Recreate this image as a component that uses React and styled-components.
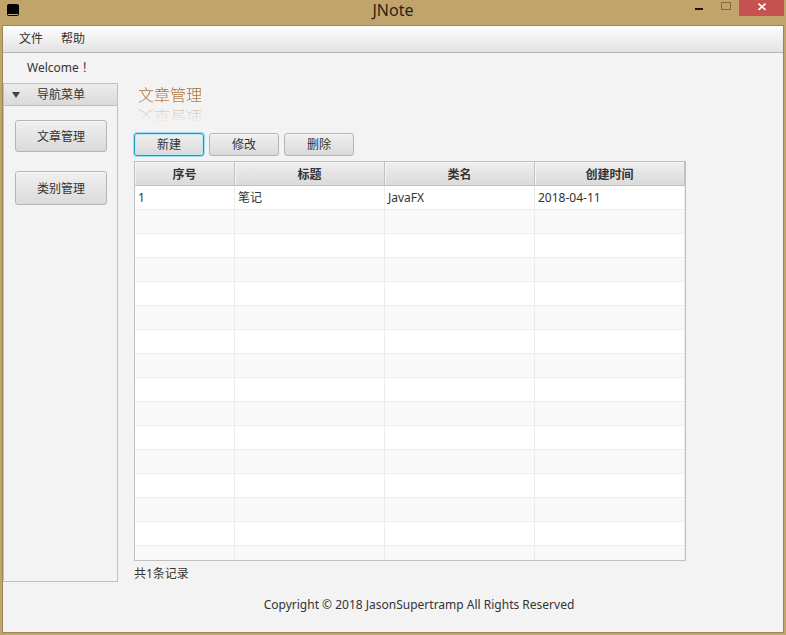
import React from "react";
import styled, { createGlobalStyle, css } from "styled-components";

const GlobalStyle = createGlobalStyle`
  *, *::before, *::after { box-sizing: border-box; }
  body {
    margin: 0;
    background: #c0a46c;
    color: #333;
    font: 12px/16px "Noto Sans", "Noto Sans CJK SC", sans-serif;
  }
  button { font: inherit; color: inherit; }
`;

const Window = styled.div`
  display: flex;
  flex-direction: column;
  min-height: 100vh;
  padding: 0 2px 2px;
`;

const TitleBar = styled.header`
  display: grid;
  grid-template-columns: 1fr auto 1fr;
  height: 25px;
`;

const AppIcon = styled.svg`
  margin: 4px 0 0 5px;
`;

const Title = styled.h1`
  margin: 0;
  font-size: 16px;
  line-height: 20px;
  font-weight: 400;
  color: #2c2413;
`;

const Controls = styled.div`
  display: flex;
  justify-content: flex-end;
  align-items: flex-start;
`;

const ControlButton = styled.button`
  display: flex;
  width: ${(p) => (p.$close ? 45 : 27)}px;
  height: 16px;
  padding: 0;
  border: 0;
  background: ${(p) => (p.$close ? "#c75050" : "transparent")};
  svg { margin: auto; }
`;

const Client = styled.div`
  flex: 1;
  display: flex;
  flex-direction: column;
  border: 1px solid #9a8656;
  background: #f3f3f3;
`;

const MenuBar = styled.nav`
  display: flex;
  height: 27px;
  padding-left: 8px;
  background: linear-gradient(#fdfdfd, #e3e3e3);
  border-bottom: 1px solid #b4b4b4;
`;

const MenuItem = styled.button`
  padding: 0 8px;
  margin-right: 2px;
  border: 0;
  background: none;
`;

const Welcome = styled.p`
  margin: 0;
  padding: 7px 24px;
  font-family: "Noto Sans", "Noto Sans CJK TC", sans-serif;
`;

const Body = styled.div`
  display: flex;
  gap: 16px;
`;

const Sidebar = styled.aside`
  flex: 0 0 115px;
  border: 1px solid #c0c0c0;
`;

const PaneHeader = styled.button`
  display: flex;
  align-items: center;
  gap: 17px;
  width: 100%;
  height: 22px;
  padding: 0 8px;
  border: 0;
  border-bottom: 1px solid #c0c0c0;
  background: linear-gradient(#ececec, #dadada);
`;

const PaneBody = styled.div`
  display: flex;
  flex-direction: column;
  gap: 19px;
  padding: 14px 10px 14px 11px;
`;

const raised = css`
  padding: 0;
  border: 1px solid #b5b5b5;
  border-radius: 3px;
  background: linear-gradient(#f0f0f0, #dadada);
  box-shadow: inset 0 1px #f8f8f8;
`;

const NavButton = styled.button`
  ${raised}
  height: ${(p) => (p.$tall ? 34 : 32)}px;
  padding-top: 2px;
`;

const Main = styled.main`
  flex: 1;
  min-width: 0;
`;

const Heading = styled.h2`
  width: max-content;
  margin: 2px 0 28px 4px;
  font-size: 16px;
  line-height: 20px;
  font-weight: 300;
  background: linear-gradient(#98602c, #b87a3e);
  background-clip: text;
  color: transparent;
  -webkit-box-reflect: below 2px linear-gradient(transparent 25%, rgba(0, 0, 0, 0.5));
`;

const Toolbar = styled.div`
  display: flex;
  gap: 5px;
  margin-bottom: 5px;
`;

const ActionButton = styled.button`
  ${raised}
  width: 70px;
  height: 23px;
  ${(p) =>
    p.$focused &&
    css`
      border-color: #1a9cbd;
      box-shadow: 0 0 0 1px #9edcf0, inset 0 0 0 1px #c4e6f0;
    `}
`;

const TableView = styled.div`
  max-width: 552px;
  height: 400px;
  margin-right: 16px;
  overflow: hidden;
  border: 1px solid #c0c0c0;
  background: #fff;
`;

const Table = styled.table`
  width: 100%;
  table-layout: fixed;
  border-collapse: separate;
  border-spacing: 0;
`;

const Col = styled.col`
  width: ${(p) => (p.$share / 11) * 100}%;
`;

const HeadCell = styled.th`
  height: 24px;
  padding: 2px 0 0;
  font-weight: 700;
  border-right: 1px solid #c0c0c0;
  border-bottom: 1px solid #c0c0c0;
  background: linear-gradient(#efefef, #dadada);
  box-shadow: inset 1px 1px #f6f6f6;
`;

const Row = styled.tr`
  background: #fff;
  &:nth-child(even) { background: #f9f9f9; }
`;

const Cell = styled.td`
  height: 24px;
  padding: 0 3px;
  border-right: 1px solid #ececec;
  border-bottom: 1px solid #ececec;
`;

const Count = styled.p`
  margin: 0;
  padding: 5px 0 0;
`;

const Footer = styled.footer`
  padding: 15px 0 16px 52px;
  text-align: center;
`;

const columns = [
  { label: "序号", share: 2 },
  { label: "标题", share: 3 },
  { label: "类名", share: 3 },
  { label: "创建时间", share: 3 },
];
const records = [["1", "笔记", "JavaFX", "2018-04-11"]];
const ROW_COUNT = 16;
const rows = Array.from({ length: ROW_COUNT }, (_, i) => records[i] || ["", "", "", ""]);

export default function App() {
  return (
    <Window>
      <GlobalStyle />
      <TitleBar>
        <AppIcon width="12" height="12" viewBox="0 0 12 12" aria-hidden="true">
          <rect width="12" height="12" rx="2" fill="#050505" />
          <path d="M1 10.500h10" stroke="#b5aa8e" />
        </AppIcon>
        <Title>JNote</Title>
        <Controls>
          <ControlButton aria-label="最小化">
            <svg width="9" height="12"><path d="M1 6h8v2H1z" fill="#1c1708" /></svg>
          </ControlButton>
          <ControlButton aria-label="最大化">
            <svg width="11" height="12"><path d="M1.500 .5v7h9v-7z" fill="none" stroke="#806b40" /></svg>
          </ControlButton>
          <ControlButton $close aria-label="关闭">
            <svg width="8" height="12"><path d="M.5 1.500l7 6.500M7.500 1.500l-7 6.500" stroke="#fff" strokeWidth="1.600" /></svg>
          </ControlButton>
        </Controls>
      </TitleBar>
      <Client>
        <MenuBar>
          <MenuItem>文件</MenuItem>
          <MenuItem>帮助</MenuItem>
        </MenuBar>
        <Welcome>Welcome！</Welcome>
        <Body>
          <Sidebar>
            <PaneHeader aria-expanded="true">
              <svg width="8" height="6" aria-hidden="true"><path d="M0 0h8L4 6z" fill="#444" /></svg>
              导航菜单
            </PaneHeader>
            <PaneBody>
              <NavButton>文章管理</NavButton>
              <NavButton $tall>类别管理</NavButton>
            </PaneBody>
          </Sidebar>
          <Main>
            <Heading>文章管理</Heading>
            <Toolbar>
              <ActionButton $focused>新建</ActionButton>
              <ActionButton>修改</ActionButton>
              <ActionButton>删除</ActionButton>
            </Toolbar>
            <TableView>
              <Table>
                <colgroup>
                  {columns.map((c) => <Col key={c.label} $share={c.share} />)}
                </colgroup>
                <thead>
                  <tr>{columns.map((c) => <HeadCell key={c.label} scope="col">{c.label}</HeadCell>)}</tr>
                </thead>
                <tbody>
                  {rows.map((r, i) => (
                    <Row key={i}>{r.map((v, j) => <Cell key={j}>{v}</Cell>)}</Row>
                  ))}
                </tbody>
              </Table>
            </TableView>
            <Count>共1条记录</Count>
          </Main>
        </Body>
        <Footer>Copyright © 2018 JasonSupertramp All Rights Reserved</Footer>
      </Client>
    </Window>
  );
}
